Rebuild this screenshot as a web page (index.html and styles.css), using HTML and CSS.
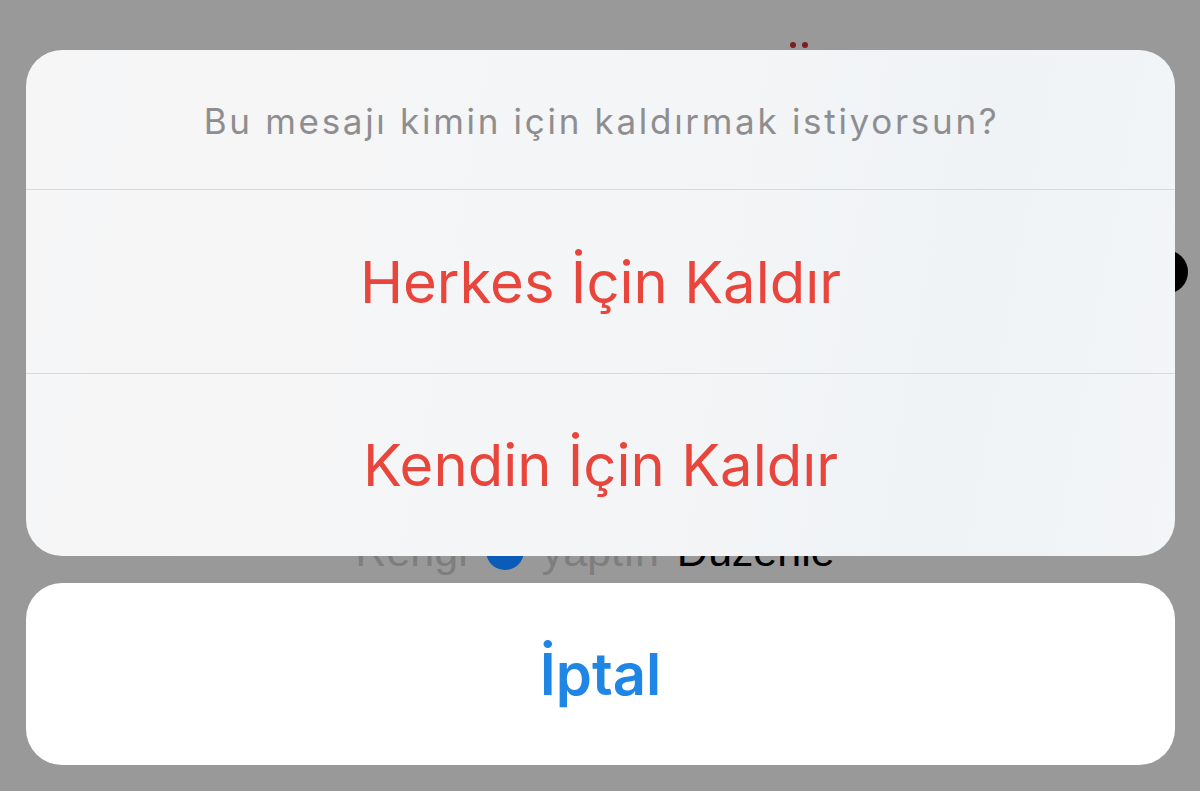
FILE: index.html
```html
<!DOCTYPE html>
<html lang="tr">
<head>
<meta charset="utf-8">
<link rel="stylesheet" href="styles.css">
</head>
<body>
<div class="page">
  <div class="under">
    <div class="top-mark"><span></span><span></span></div>
    <div class="dot-row"><span class="black-dot"></span></div>
    <div class="status-row">
      <span class="muted">Rengi</span>
      <span class="blue-dot"></span>
      <span class="muted">yaptın</span>
      <span class="strong">Düzenle</span>
    </div>
  </div>
  <div class="overlay">
    <div class="sheet">
      <div class="sheet-title">Bu mesajı kimin için kaldırmak istiyorsun?</div>
      <div class="sheet-action danger">Herkes İçin Kaldır</div>
      <div class="sheet-action danger last">Kendin İçin Kaldır</div>
    </div>
    <div class="cancel">İptal</div>
  </div>
</div>
</body>
</html>
```

FILE: styles.css
```css
html, body {
  margin: 0;
  padding: 0;
  background: #999999;
  width: 1200px;
  height: 791px;
  overflow: hidden;
  font-family: Inter, "Noto Sans", sans-serif;
}
.page {
  position: relative;
  width: 1200px;
  height: 791px;
}
.under {
  display: flex;
  flex-direction: column;
}
.top-mark {
  margin-top: 42px;
  margin-left: 790px;
  display: flex;
  gap: 6px;
  height: 8px;
}
.top-mark span {
  width: 6px;
  height: 6px;
  border-radius: 50%;
  background: #7a1f1f;
}
.dot-row {
  margin-top: 200px;
  display: flex;
  justify-content: flex-end;
  padding-right: 12px;
}
.black-dot {
  width: 44px;
  height: 44px;
  border-radius: 50%;
  background: #000;
}
.status-row {
  margin-top: 232px;
  display: flex;
  justify-content: center;
  align-items: center;
  gap: 18px;
  padding-right: 10px;
  font-size: 43px;
  line-height: 50px;
  font-family: "Liberation Sans", sans-serif;
}
.muted { color: #7e7e7e; }
.strong { color: #000; }
.blue-dot {
  width: 38px;
  height: 38px;
  border-radius: 50%;
  background: #0a5cb8;
}
.overlay {
  position: absolute;
  top: 0;
  left: 0;
  right: 0;
  padding: 50px 25px 0 26px;
  display: flex;
  flex-direction: column;
  gap: 27px;
}
.sheet {
  background: linear-gradient(100deg, #f6f6f7 0%, #f4f5f6 55%, #eff3f6 80%, #f3f5f7 100%);
  border-radius: 36px;
  overflow: hidden;
  display: flex;
  flex-direction: column;
}
.sheet-title {
  height: 140px;
  display: flex;
  align-items: center;
  justify-content: center;
  font-size: 35px;
  letter-spacing: 2.7px;
  color: #8e8e90;
  border-bottom: 1px solid #d9dadd;
  padding-top: 2px;
  padding-left: 2px;
  box-sizing: border-box;
}
.sheet-action {
  height: 184px;
  display: flex;
  align-items: center;
  justify-content: center;
  font-size: 58px;
  border-bottom: 1px solid #d9dadd;
  box-sizing: border-box;
}
.sheet-action.last {
  height: 182px;
  border-bottom: none;
}
.danger { color: #e8463d; }
.cancel {
  height: 182px;
  background: #ffffff;
  border-radius: 36px;
  display: flex;
  align-items: center;
  justify-content: center;
  font-size: 58px;
  font-weight: 600;
  color: #1f86e6;
}
```
